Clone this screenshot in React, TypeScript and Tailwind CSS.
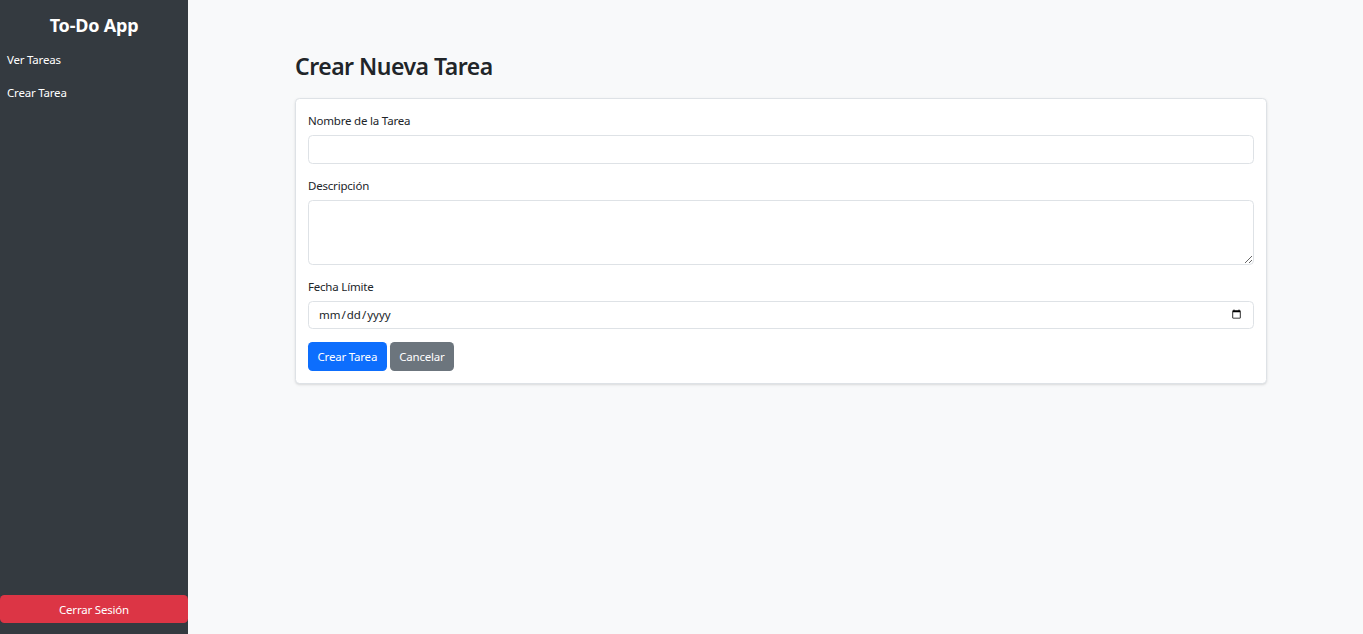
import { useState } from "react";

const font = { fontFamily: '"Noto Sans", "Open Sans", sans-serif' };

const Sidebar = () => (
  <aside className="flex w-[188px] shrink-0 flex-col bg-[#343a40] text-white">
    <h3 className="pt-[12px] text-center text-[18px] leading-[26px] font-bold tracking-[-0.2px]">
      To-Do App
    </h3>
    <nav className="mt-[6px] flex flex-col text-[11.5px] leading-[18px] tracking-[-0.2px]">
      <a href="#" className="px-[7px] py-[7px]">
        Ver Tareas
      </a>
      <a href="#" className="px-[7px] py-[8px]">
        Crear Tarea
      </a>
    </nav>
    <div className="mt-auto mb-[11px]">
      <button className="h-[28.5px] w-full rounded-[4.5px] bg-[#dc3545] pt-[1px] text-[11.5px] tracking-[-0.2px] text-white">
        Cerrar Sesión
      </button>
    </div>
  </aside>
);

const labelCls = "mb-[6px] block pt-[1px] text-[11.5px] leading-[17px] tracking-[-0.2px] text-[#212529]";
const inputCls =
  "block w-full rounded-[4.5px] border border-[#dee2e6] bg-white px-[9px] text-[11.5px] text-[#212529] outline-none";
const btnCls = "h-[28.5px] rounded-[4.5px] px-[9.5px] pt-[1px] text-[11.5px] tracking-[-0.2px] text-white";

export default function App() {
  const [name, setName] = useState("");
  const [desc, setDesc] = useState("");
  const [date, setDate] = useState("");

  return (
    <div className="flex min-h-[634px] bg-[#f8f9fa]" style={font}>
      <Sidebar />
      <main className="flex-1">
        <div className="ml-[107px] w-[972px] pt-[49px]">
          <h2 className="mb-[14px] text-[23px] leading-[35px] font-semibold tracking-[-0.5px] text-[#212529]">
            Crear Nueva Tarea
          </h2>
          <form
            className="rounded-[4.5px] border border-[#dee2e6] bg-white p-[12px] shadow-sm"
            onSubmit={(e) => e.preventDefault()}
          >
            <div className="mb-[12px]">
              <label className={labelCls}>Nombre de la Tarea</label>
              <input
                className={`${inputCls} h-[28.5px]`}
                value={name}
                onChange={(e) => setName(e.target.value)}
              />
            </div>
            <div className="mb-[12px]">
              <label className={labelCls}>Descripción</label>
              <textarea
                className={`${inputCls} h-[65px] py-[4px]`}
                value={desc}
                onChange={(e) => setDesc(e.target.value)}
              />
            </div>
            <div className="mb-[13px]">
              <label className={labelCls}>Fecha Límite</label>
              <input
                type="date"
                className={`${inputCls} h-[28.5px]`}
                value={date}
                onChange={(e) => setDate(e.target.value)}
              />
            </div>
            <div className="flex gap-[3px]">
              <button className={`${btnCls} bg-[#0d6efd]`}>Crear Tarea</button>
              <button type="button" className={`${btnCls} bg-[#6c757d]`}>
                Cancelar
              </button>
            </div>
          </form>
        </div>
      </main>
    </div>
  );
}
